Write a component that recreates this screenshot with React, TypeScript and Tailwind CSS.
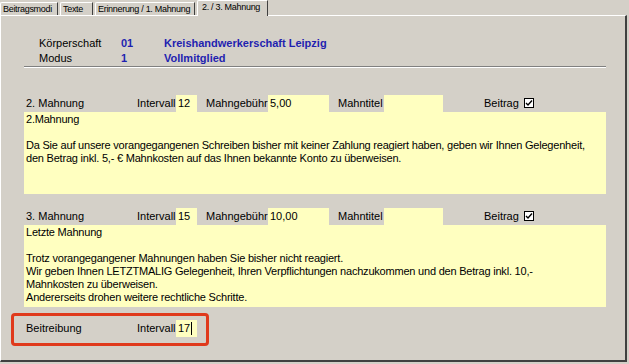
import React from 'react'

const yellow = 'bg-[#ffffc0]'

function Field({ value, w, cursor }: { value: string; w: string; cursor?: boolean }) {
  return (
    <div className={`${w} h-[17px] ${yellow} pl-[2px] leading-[17px] flex items-center`}>
      <span>{value}</span>
      {cursor && <span className="w-px h-[13px] bg-black ml-px" />}
    </div>
  )
}

function Checkbox() {
  return (
    <div className="w-[10px] h-[10px] border border-black bg-white flex items-center justify-center">
      <svg width="8" height="8" viewBox="0 0 8 8">
        <path d="M1 4 L3 6 L7 1.5" stroke="black" strokeWidth="1.4" fill="none" />
      </svg>
    </div>
  )
}

function MahnRow({ label, intervall, gebuehr }: { label: string; intervall: string; gebuehr: string }) {
  return (
    <div className="flex items-center h-[18px]">
      <div className="w-[113px] pl-[2px]">{label}</div>
      <div className="w-[39px]">Intervall</div>
      <Field value={intervall} w="w-[21px]" />
      <div className="w-[62px] ml-[9px]">Mahngebühr</div>
      <Field value={gebuehr} w="w-[61px]" />
      <div className="w-[46px] ml-[9px]">Mahntitel</div>
      <Field value="" w="w-[59px]" />
      <div className="w-[40px] ml-[41px]">Beitrag</div>
      <Checkbox />
    </div>
  )
}

function TextBox({ lines }: { lines: string[] }) {
  return (
    <div className={`w-[582px] h-[82px] ${yellow} px-[2px] pt-px tracking-[-0.21px]`}>
      {lines.map((l, i) => (
        <div key={i} className="h-[13px] leading-[13px] whitespace-nowrap">
          {l}
        </div>
      ))}
    </div>
  )
}

const tabs = [
  { t: 'Beitragsmodi', w: 'w-[58px]' },
  { t: 'Texte', w: 'w-[33px]' },
  { t: 'Erinnerung / 1. Mahnung', w: 'w-[100px]' },
]

export default function App() {
  return (
    <div className="w-[629px] h-[364px] bg-[#d4d0c8] text-[11px] text-black font-['Liberation_Sans',Arial,sans-serif] overflow-hidden">
      {/* tab strip */}
      <div className="flex items-end h-[15px] gap-[2px] text-[9px] tracking-[-0.3px]">
        {tabs.map((tab) => (
          <div
            key={tab.t}
            className={`${tab.w} h-[13px] pl-[2px] border-t border-l border-white border-r border-r-[#404040] leading-[12px] rounded-tl-[2px] whitespace-nowrap`}
          >
            {tab.t}
          </div>
        ))}
        <div className="relative z-10 w-[71px] h-[16px] -mb-px pl-[4px] bg-[#d4d0c8] border-t border-l border-white border-r border-r-[#404040] leading-[13px] rounded-tl-[2px] whitespace-nowrap">
          2. / 3. Mahnung
        </div>
      </div>

      {/* panel */}
      <div className="w-[627px] h-[347px] border-t border-l border-white border-r-2 border-b-2 border-r-[#404040] border-b-[#404040] pl-[23px] pt-[20px]">
        <div className="w-[582px]">
          <div className="flex h-[15px] items-center pl-[15px]">
            <div className="w-[82px]">Körperschaft</div>
            <div className="w-[43px] font-bold text-[#1f1fb0]">01</div>
            <div className="font-bold text-[#1f1fb0]">Kreishandwerkerschaft Leipzig</div>
          </div>
          <div className="flex h-[15px] items-center pl-[15px]">
            <div className="w-[82px]">Modus</div>
            <div className="w-[43px] font-bold text-[#1f1fb0]">1</div>
            <div className="font-bold text-[#1f1fb0]">Vollmitglied</div>
          </div>
          <div className="border-t border-[#808080] border-b border-b-white" />
        </div>

        <div className="mt-[26px]">
          <MahnRow label="2. Mahnung" intervall="12" gebuehr="5,00" />
          <TextBox
            lines={[
              '2.Mahnung',
              '',
              'Da Sie auf unsere vorangegangenen Schreiben bisher mit keiner Zahlung reagiert haben, geben wir Ihnen Gelegenheit,',
              'den Betrag inkl. 5,- € Mahnkosten auf das Ihnen bekannte Konto zu überweisen.',
            ]}
          />
        </div>

        <div className="mt-[13px]">
          <MahnRow label="3. Mahnung" intervall="15" gebuehr="10,00" />
          <TextBox
            lines={[
              'Letzte Mahnung',
              '',
              'Trotz vorangegangener Mahnungen haben Sie bisher nicht reagiert.',
              'Wir geben Ihnen LETZTMALIG Gelegenheit, Ihren Verpflichtungen nachzukommen und den Betrag inkl. 10,-',
              'Mahnkosten zu überweisen.',
              'Andererseits drohen weitere rechtliche Schritte.',
            ]}
          />
        </div>

        <div className="relative mt-[13px] flex items-center h-[17px]">
          <div className="w-[113px] pl-[2px]">Beitreibung</div>
          <div className="w-[39px]">Intervall</div>
          <Field value="17" w="w-[21px]" cursor />
          <span className="absolute left-[-13px] top-[-7px] w-[198px] h-[33px] border-[3px] border-[#e03a1c] rounded-[4px]" />
        </div>
      </div>
    </div>
  )
}
